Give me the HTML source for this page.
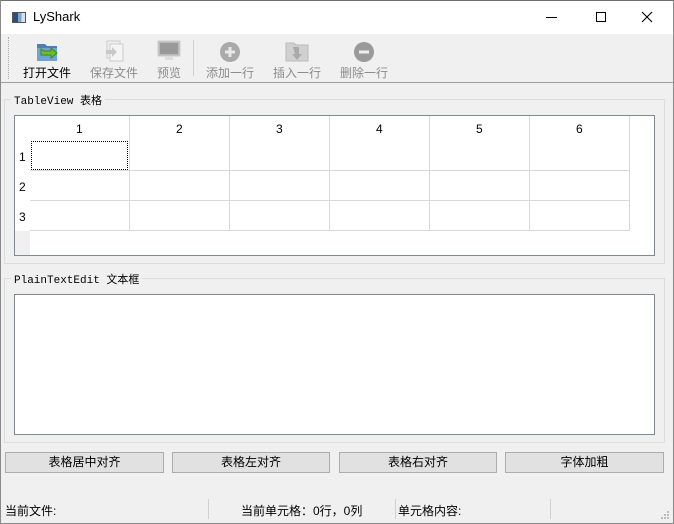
<!DOCTYPE html>
<html><head><meta charset="utf-8"><style>
*{margin:0;padding:0;box-sizing:border-box}
body{width:674px;height:524px;background:#f0f0f0;position:relative;overflow:hidden;font-family:"Liberation Sans","Noto Sans CJK SC",sans-serif;font-size:12px;color:#000}
.a{position:absolute}
.t{position:absolute;white-space:nowrap}
.mono{font-family:"Liberation Mono","Noto Sans CJK SC",monospace;font-size:11px}
.gray{color:#8c8c8c}
.btn{position:absolute;top:452px;height:21px;background:#e1e1e1;border:1px solid #adadad;text-align:center;line-height:19px;font-size:12px}
.hl{position:absolute;background:#d8d8d8;height:1px}
.vl{position:absolute;background:#d8d8d8;width:1px}
</style></head><body>
<!-- window border -->
<div class="a" style="left:0;top:0;width:674px;height:524px;border:1px solid #8a8a8a;border-top-color:#6f6f6f;z-index:9;pointer-events:none"></div>
<!-- title bar -->
<div class="a" style="left:0;top:0;width:674px;height:34px;background:#fff"></div>
<div class="a" style="left:12px;top:12px;width:14px;height:11px;border:1px solid #555;background:linear-gradient(90deg,#2a4d8a 0 40%,#7ab 40% 70%,#dde 70%)"></div>
<div class="t" style="left:33px;top:9px;font-size:13px">LyShark</div>
<div class="a" style="left:546px;top:17px;width:11px;height:1px;background:#000"></div>
<div class="a" style="left:596px;top:12px;width:10px;height:10px;border:1px solid #000"></div>
<svg class="a" style="left:641px;top:11px" width="12" height="12"><path d="M1 1L11 11M11 1L1 11" stroke="#000" stroke-width="1.1"/></svg>
<!-- toolbar -->
<div class="a" style="left:8px;top:37px;width:2px;height:42px;border-left:1px dotted #aaa"></div>
<svg class="a" style="left:35px;top:39px" width="25" height="24"><path d="M2 5h8l2 2h10v15H2z" fill="#4a7fb8"/><path d="M2 9h20v13H2z" fill="#6fa3d6"/><path d="M6 10v6h10v3l6-5-6-5v3H9z" fill="#6cbf2a" stroke="#3d8a10"/></svg>
<svg class="a" style="left:102px;top:39px" width="24" height="24"><rect x="5" y="2" width="13" height="17" fill="#eee" stroke="#ccc"/><rect x="8" y="5" width="13" height="17" fill="#f4f4f4" stroke="#ccc"/><path d="M4 11h6v-3l5 5-5 5v-3H4z" fill="#c8c8c8"/></svg>
<svg class="a" style="left:157px;top:39px" width="24" height="24"><rect x="1" y="2" width="22" height="15" fill="#bbb" stroke="#ccc"/><rect x="3" y="4" width="18" height="11" fill="#999"/><rect x="8" y="17" width="8" height="4" fill="#ddd"/></svg>
<div class="a" style="left:193px;top:40px;width:1px;height:36px;background:#d0d0d0"></div>
<svg class="a" style="left:218px;top:39px" width="24" height="24"><circle cx="12" cy="13" r="10" fill="#aaa"/><path d="M12 8v10M7 13h10" stroke="#e8e8e8" stroke-width="3"/></svg>
<svg class="a" style="left:285px;top:39px" width="24" height="24"><path d="M1 4h8l2 2h12v16H1z" fill="#d0d0d0" stroke="#bbb"/><path d="M8 8h6v7h3l-5 6-5-6h3z" fill="#aaa"/></svg>
<svg class="a" style="left:352px;top:39px" width="24" height="24"><circle cx="12" cy="13" r="10" fill="#9a9a9a"/><path d="M7 13h10" stroke="#eee" stroke-width="3"/></svg>
<div class="t" style="left:23px;top:64px">打开文件</div>
<div class="t gray" style="left:90px;top:64px">保存文件</div>
<div class="t gray" style="left:157px;top:64px">预览</div>
<div class="t gray" style="left:206px;top:64px">添加一行</div>
<div class="t gray" style="left:273px;top:64px">插入一行</div>
<div class="t gray" style="left:340px;top:64px">删除一行</div>
<div class="a" style="left:0;top:82px;width:674px;height:1px;background:#a0a0a0"></div>
<!-- group 1 -->
<div class="a" style="left:4px;top:99px;width:661px;height:165px;border:1px solid #dcdcdc"></div>
<div class="t mono" style="left:11px;top:92px;background:#f0f0f0;padding:0 3px">TableView 表格</div>
<div class="a" style="left:14px;top:115px;width:641px;height:141px;border:1px solid #828790;background:#fff"></div>
<div class="a" style="left:15px;top:231px;width:15px;height:24px;background:#f0f0f0"></div>
<div class="vl" style="left:129px;top:116px;height:115px"></div>
<div class="vl" style="left:229px;top:116px;height:115px"></div>
<div class="vl" style="left:329px;top:116px;height:115px"></div>
<div class="vl" style="left:429px;top:116px;height:115px"></div>
<div class="vl" style="left:529px;top:116px;height:115px"></div>
<div class="vl" style="left:629px;top:116px;height:115px"></div>
<div class="hl" style="left:30px;top:170px;width:600px"></div>
<div class="hl" style="left:30px;top:200px;width:600px"></div>
<div class="hl" style="left:30px;top:230px;width:600px"></div>
<div class="a" style="left:31px;top:141px;width:97px;height:29px;border:1px dotted #000"></div>
<div class="t" style="left:76px;top:122px">1</div>
<div class="t" style="left:176px;top:122px">2</div>
<div class="t" style="left:276px;top:122px">3</div>
<div class="t" style="left:376px;top:122px">4</div>
<div class="t" style="left:476px;top:122px">5</div>
<div class="t" style="left:576px;top:122px">6</div>
<div class="t" style="left:19px;top:150px">1</div>
<div class="t" style="left:19px;top:180px">2</div>
<div class="t" style="left:19px;top:210px">3</div>
<!-- group 2 -->
<div class="a" style="left:4px;top:278px;width:661px;height:165px;border:1px solid #dcdcdc"></div>
<div class="t mono" style="left:11px;top:271px;background:#f0f0f0;padding:0 3px">PlainTextEdit 文本框</div>
<div class="a" style="left:14px;top:294px;width:641px;height:141px;border:1px solid #828790;background:#fff"></div>
<!-- buttons -->
<div class="btn" style="left:5px;width:159px">表格居中对齐</div>
<div class="btn" style="left:172px;width:158px">表格左对齐</div>
<div class="btn" style="left:339px;width:158px">表格右对齐</div>
<div class="btn" style="left:505px;width:159px">字体加粗</div>
<!-- status -->
<div class="t" style="left:5px;top:502px">当前文件:</div>
<div class="a" style="left:208px;top:499px;width:1px;height:20px;background:#d0d0d0"></div>
<div class="t" style="left:241px;top:502px">当前单元格：0行，0列</div>
<div class="a" style="left:395px;top:499px;width:1px;height:20px;background:#d0d0d0"></div>
<div class="t" style="left:398px;top:502px">单元格内容:</div>
<div class="a" style="left:550px;top:499px;width:1px;height:20px;background:#d0d0d0"></div>
<svg class="a" style="left:660px;top:510px" width="10" height="10"><g fill="#bbb"><rect x="7" y="1" width="2" height="2"/><rect x="4" y="4" width="2" height="2"/><rect x="7" y="4" width="2" height="2"/><rect x="1" y="7" width="2" height="2"/><rect x="4" y="7" width="2" height="2"/><rect x="7" y="7" width="2" height="2"/></g></svg>
</body></html>
